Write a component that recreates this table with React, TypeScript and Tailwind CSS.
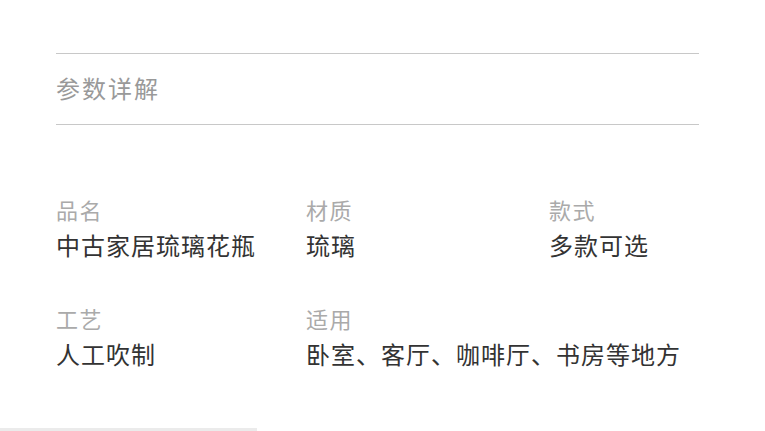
const specs = [
  { label: "品名", value: "中古家居琉璃花瓶" },
  { label: "材质", value: "琉璃" },
  { label: "款式", value: "多款可选" },
  { label: "工艺", value: "人工吹制" },
  { label: "适用", value: "卧室、客厅、咖啡厅、书房等地方" },
];

const App = () => {
  return (
    <div
      className="w-[765px] h-[431px] bg-white overflow-hidden flex flex-col"
      style={{ fontFamily: '"Noto Sans CJK SC", "Noto Sans", sans-serif' }}
    >
      <div className="ml-[56px] mr-[66px] mt-[53px] border-t border-b border-[#c8c8c8] pt-[22px] pb-[24px]">
        <h2 className="text-[24px] leading-[24px] tracking-[2px] text-[#999999]">参数详解</h2>
      </div>
      <div className="mx-[56px] mt-[73px] grid grid-cols-[250px_243px_1fr] gap-y-[50px]">
        {specs.map((s) => (
          <div key={s.label} className="flex flex-col gap-[13px] whitespace-nowrap">
            <span className="text-[22px] leading-[22px] tracking-[1.5px] text-[#aaaaaa]">{s.label}</span>
            <span className="text-[24px] leading-[24px] tracking-[1px] text-[#333333]">{s.value}</span>
          </div>
        ))}
      </div>
      <div className="mt-auto h-[3px] w-[257px] bg-[#ebebeb]" />
    </div>
  );
};

export default App;
